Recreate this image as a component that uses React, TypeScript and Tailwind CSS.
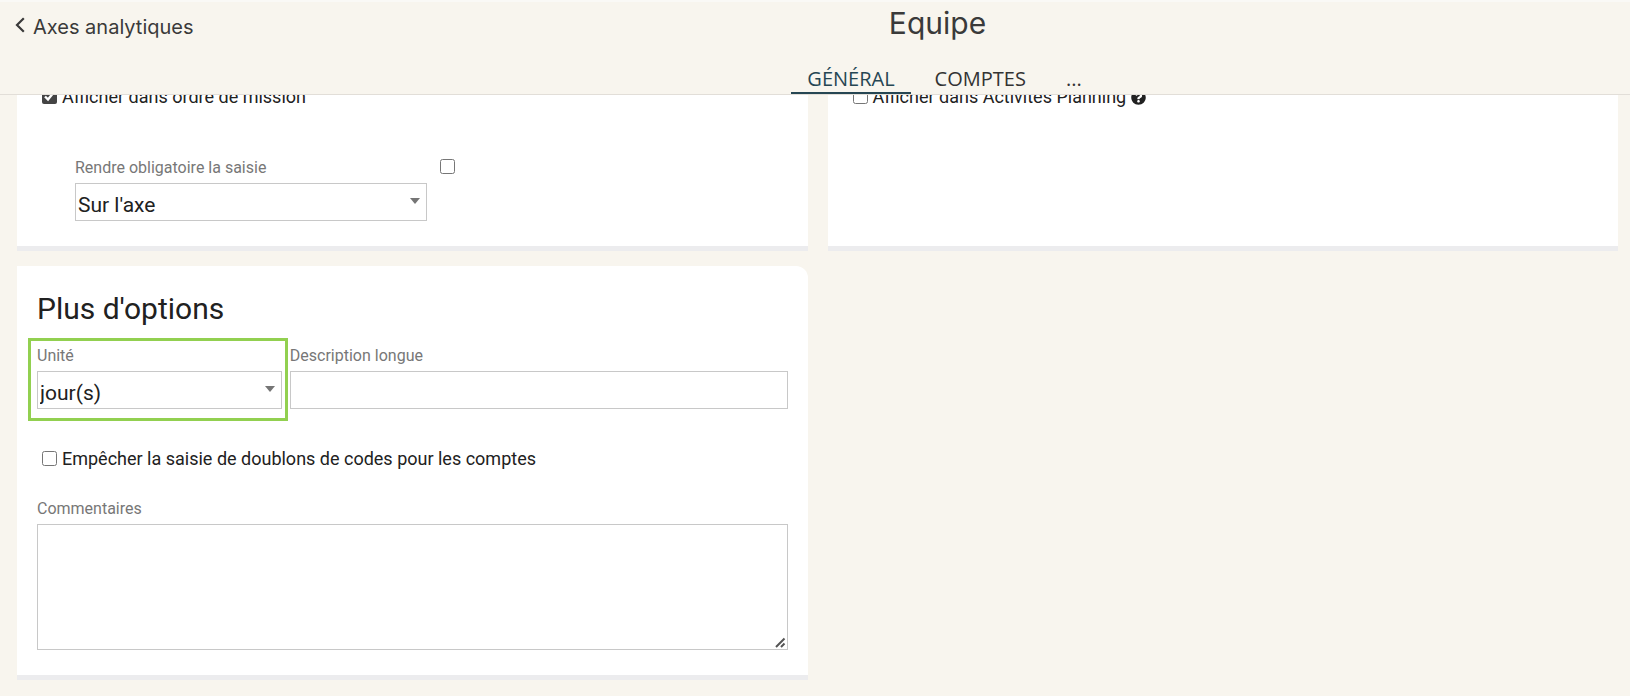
import type { ReactNode } from "react";
import { FaQuestionCircle } from "react-icons/fa";

const fieldClass =
  "block h-[38px] w-full appearance-none rounded-none border border-[#c8c8c8] bg-white px-0.5 text-[21px] text-[#212121] outline-none";

function FieldLabel({ htmlFor, children }: { htmlFor: string; children: ReactNode }) {
  return (
    <label htmlFor={htmlFor} className="mb-[3px] block text-base leading-6 text-[#777777]">
      {children}
    </label>
  );
}

function SelectField({ id, label, options }: { id: string; label: string; options: string[] }) {
  return (
    <div>
      <FieldLabel htmlFor={id}>{label}</FieldLabel>
      <div className="relative">
        <select id={id} className={`${fieldClass} pt-1.5`}>
          {options.map((option) => (
            <option key={option}>{option}</option>
          ))}
        </select>
        <svg
          viewBox="0 0 10 6"
          className="pointer-events-none absolute top-[15px] right-[7px] h-1.5 w-2.5"
          aria-hidden="true"
        >
          <path d="M0 0h10L5 6z" fill="#757575" />
        </svg>
      </div>
    </div>
  );
}

function CheckboxRow({
  id,
  label,
  checked = false,
  children,
}: {
  id: string;
  label: string;
  checked?: boolean;
  children?: ReactNode;
}) {
  return (
    <div className="flex h-7 items-center gap-[5px] pl-[5px] text-lg leading-7 text-[#212121]">
      <input id={id} type="checkbox" defaultChecked={checked} className="mb-0.5 size-[15px] accent-[#444444]" />
      <label htmlFor={id}>{label}</label>
      {children}
    </div>
  );
}

function Card({ className = "", children }: { className?: string; children: ReactNode }) {
  return <section className={`border-b-[5px] border-[#ececee] bg-white px-5 pb-[25px] ${className}`}>{children}</section>;
}

export default function App() {
  return (
    <div className="min-h-screen bg-[#f8f5ee] font-['Roboto',sans-serif]">
      <header className="relative z-10 flex h-[95px] border-t-2 border-b border-t-[#faf9f6] border-b-[#e2ded8] bg-[#f8f5ee]">
        <div className="w-[245px] shrink-0 pt-[11px] pl-[15px]">
          <a
            href="#axes"
            className="flex items-center gap-2 font-['Inter',sans-serif] text-xl leading-7 text-[#3a3a3a]"
          >
            <svg viewBox="0 0 10 16" className="mb-1 h-4 w-2.5" fill="none" aria-hidden="true">
              <path d="M8.8 1.2 2 8l6.8 6.8" stroke="#3a3a3a" strokeWidth="2.2" />
            </svg>
            Axes analytiques
          </a>
        </div>
        <div className="flex flex-1 flex-col items-center justify-between">
          <h1 className="font-['Inter',sans-serif] text-3xl leading-[42px] text-[#3a3a3a]">Equipe</h1>
          <nav className="flex gap-2 pl-3.5 font-['Open_Sans',sans-serif] text-xl leading-[26px] text-[#333333]">
            <a href="#general" className="border-b-2 border-[#264653] px-4 text-[#264653]">
              GÉNÉRAL
            </a>
            <a href="#comptes" className="border-b-2 border-transparent px-4">
              COMPTES
            </a>
            <button type="button" className="border-b-2 border-transparent px-4">
              ...
            </button>
          </nav>
        </div>
      </header>

      <main className="-mt-5 grid grid-cols-2 gap-x-5 gap-y-[15px] pr-3 pl-[17px] pb-4">
        <Card className="pt-2">
          <CheckboxRow id="ordre" label="Afficher dans ordre de mission" checked />
          <div className="mt-[45px] flex gap-[13px] pl-[38px]">
            <div className="w-88">
              <SelectField id="saisie" label="Rendre obligatoire la saisie" options={["Sur l'axe", "Sur le compte"]} />
            </div>
            <input type="checkbox" aria-label="Rendre obligatoire" className="mt-[3px] size-[15px]" />
          </div>
        </Card>

        <Card className="pt-2">
          <CheckboxRow id="planning" label="Afficher dans Activités Planning">
            <FaQuestionCircle className="size-[15px]" />
          </CheckboxRow>
        </Card>

        <Card className="rounded-tr-xl pt-5">
          <h2 className="mb-3 text-[30px] leading-[46px] text-[#212121]">Plus d'options</h2>
          <div className="grid grid-cols-[245fr_498fr] gap-2">
            <div className="relative">
              <SelectField id="unite" label="Unité" options={["jour(s)", "heure(s)"]} />
              <div className="pointer-events-none absolute -top-1.5 -right-1.5 -bottom-3 -left-[9px] border-[3px] border-[#92d050]" />
            </div>
            <div>
              <FieldLabel htmlFor="description">Description longue</FieldLabel>
              <input id="description" type="text" className={fieldClass} />
            </div>
          </div>
          <div className="mt-9 mb-6">
            <CheckboxRow id="doublons" label="Empêcher la saisie de doublons de codes pour les comptes" />
          </div>
          <FieldLabel htmlFor="commentaires">Commentaires</FieldLabel>
          <div className="relative">
            <textarea
              id="commentaires"
              className="block h-[126px] w-full border border-[#c8c8c8] bg-white p-1 text-[21px] text-[#212121] outline-none"
            />
            <svg
              viewBox="0 0 12 12"
              className="pointer-events-none absolute right-px bottom-px size-3"
              aria-hidden="true"
            >
              <path d="M0 0h12v12H0z" fill="#fff" />
              <path d="M1 10 9.500 1.500M6 10l3.500-3.500" stroke="#555555" strokeWidth="2" />
            </svg>
          </div>
        </Card>
      </main>
    </div>
  );
}
